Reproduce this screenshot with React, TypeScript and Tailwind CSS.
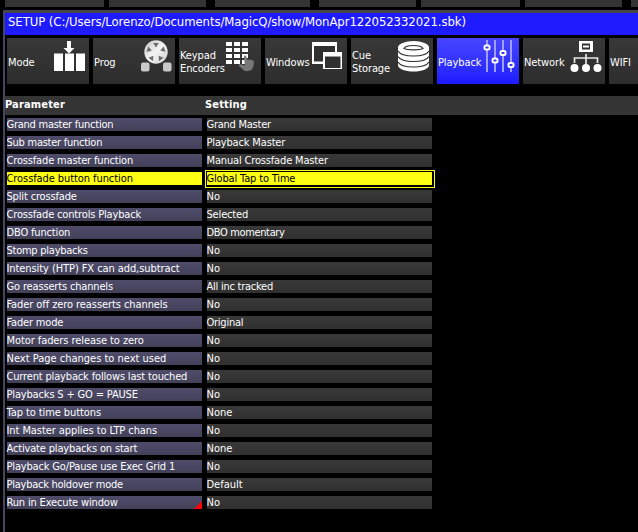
import type { ReactNode } from 'react';

const topBar = [
  'ml-[5px] w-[99px]',
  'ml-[5px] w-[97px]',
  'ml-[9px] w-[95px]',
  'ml-[9px] w-[97px]',
  'ml-[5px] w-[99px]',
  'ml-[5px] w-[97px]',
  'ml-[9px] w-[99px]',
];

function ModeIcon() {
  return (
    <svg width="34" height="34" viewBox="0 0 34 34">
      <path d="M14 1h4v7h3.500L16 13.500 10.500 8H14z" fill="#fff" />
      <path d="M1 13.500h9v17.500H1zM12 13.500h9v17.500h-9zM23 13.500h9v17.500h-9z" fill="#fff" />
    </svg>
  );
}

function ProgIcon() {
  return (
    <svg width="34" height="34" viewBox="0 0 34 34">
      <defs>
        <linearGradient id="wheel" x1="0" y1="0" x2="1" y2="1">
          <stop offset="0" stopColor="#c4c4c4" />
          <stop offset="0.5" stopColor="#f4f4f4" />
          <stop offset="1" stopColor="#cdcdcd" />
        </linearGradient>
      </defs>
      <circle cx="17" cy="12" r="11.700" fill="url(#wheel)" />
      <g fill="#6a6a6a">
        {[0, 72, 144, 216, 288].map((a) => (
          <path key={a} d="M14.200 3h5.600L17 7.500z" transform={`rotate(${a} 17 12)`} />
        ))}
      </g>
      <rect x="2" y="22.500" width="8.500" height="9" rx="2" fill="#c9c9c9" />
      <rect x="24" y="22.500" width="8.500" height="9" rx="2" fill="#c9c9c9" />
    </svg>
  );
}

function KeypadIcon() {
  return (
    <svg width="34" height="34" viewBox="0 0 34 34">
      <g fill="#fff">
        {[2, 8, 14, 20].map((y) =>
          [0, 8, 16].map((x) => <rect key={`${x}-${y}`} x={x + 1} y={y} width="6" height="4" />),
        )}
      </g>
      <path d="M19 16.500c0-1.300 1.800-1.300 2.200 0L22.500 20c.8-.8 1.800-.6 2.200 0 .8-.7 1.800-.4 2.100.3.900-.4 2 0 2 1.200.3 3-.3 6-2.300 8.500l-5 1.300-2-.6-5.500-4.600c-1-1.200.2-2.200 1.500-1.800l4.300 1.200z" fill="#777" />
    </svg>
  );
}

function WindowsIcon() {
  return (
    <svg width="34" height="34" viewBox="0 0 34 34">
      <path d="M1 2h25v22H1z" fill="#fff" />
      <path d="M3 6h21v15.500H3z" fill="#303030" />
      <path d="M12 12h19v17H12z" fill="#fff" />
      <path d="M14 16.500h15.500V28H14z" fill="#303030" />
    </svg>
  );
}

function StorageIcon() {
  return (
    <svg width="34" height="34" viewBox="0 0 34 34">
      <path d="M1 7v18c0 4 7 6.500 15.500 6.500S32 29 32 25V7z" fill="#fff" />
      <ellipse cx="16.500" cy="7.500" rx="15.500" ry="6.500" fill="#fff" />
      <path d="M7 8.500c1-2 5-3 9.500-3s8.500 1 9.500 3c-3 1.700-16 1.700-19 0z" fill="none" stroke="#303030" strokeWidth="1.200" />
      <g fill="none" stroke="#303030" strokeWidth="1.200">
        <path d="M1 11c2 3.500 8 5 15.500 5S30 14.500 32 11" />
        <path d="M1 16.500c2 3.500 8 5 15.500 5S30 20 32 16.500" />
        <path d="M1 22c2 3.500 8 5 15.500 5S30 25.500 32 22" />
      </g>
    </svg>
  );
}

function FadersIcon() {
  return (
    <svg width="34" height="34" viewBox="0 0 34 34">
      <path d="M4 0v32M12 0v32M20 0v32M28 0v32" stroke="#a09fff" strokeWidth="2" />
      <g fill="#3636ff" stroke="#fff" strokeWidth="2">
        <rect x="1.500" y="5.500" width="5" height="4" rx="1.500" />
        <rect x="9.500" y="18.500" width="5" height="4" rx="1.500" />
        <rect x="17.500" y="11" width="5" height="4" rx="1.500" />
        <rect x="25.500" y="23" width="5" height="4" rx="1.500" />
      </g>
    </svg>
  );
}

function NetworkIcon() {
  return (
    <svg width="34" height="34" viewBox="0 0 34 34">
      <path d="M10 1h14v11H10z" fill="#fff" />
      <path d="M13 3.500h8v6h-8z" fill="#303030" />
      <path d="M14 6.500h6" stroke="#fff" strokeWidth="2" />
      <path d="M17 14v10M5.500 23v-5h23v5" fill="none" stroke="#e6e6e6" strokeWidth="1.700" />
      <g fill="#fff">
        <circle cx="5.500" cy="28" r="4" />
        <circle cx="17" cy="28" r="4" />
        <circle cx="28.500" cy="28" r="4" />
      </g>
    </svg>
  );
}

const tabs: { lines: string[]; icon: ReactNode; active?: boolean }[] = [
  { lines: ['Mode'], icon: <ModeIcon /> },
  { lines: ['Prog'], icon: <ProgIcon /> },
  { lines: ['Keypad', 'Encoders'], icon: <KeypadIcon /> },
  { lines: ['Windows'], icon: <WindowsIcon /> },
  { lines: ['Cue', 'Storage'], icon: <StorageIcon /> },
  { lines: ['Playback'], icon: <FadersIcon />, active: true },
  { lines: ['Network'], icon: <NetworkIcon /> },
  { lines: ['WIFI'], icon: null },
];

const T = {
  a: 'tracking-normal',
  b: 'tracking-[-0.08px]',
  c: 'tracking-[-0.16px]',
  d: 'tracking-[-0.25px]',
  e: 'tracking-[-0.36px]',
};

const rows: [string, string, string, string][] = [
  ['Grand master function', T.d, 'Grand Master', T.d],
  ['Sub master function', T.d, 'Playback Master', T.c],
  ['Crossfade master function', T.c, 'Manual Crossfade Master', T.c],
  ['Crossfade button function', T.b, 'Global Tap to Time', T.c],
  ['Split crossfade', T.c, 'No', T.a],
  ['Crossfade controls Playback', T.c, 'Selected', T.c],
  ['DBO function', T.c, 'DBO momentary', T.e],
  ['Stomp playbacks', T.d, 'No', T.a],
  ['Intensity (HTP) FX can add,subtract', T.b, 'No', T.a],
  ['Go reasserts channels', T.c, 'All inc tracked', T.d],
  ['Fader off zero reasserts channels', T.b, 'No', T.a],
  ['Fader mode', T.c, 'Original', T.d],
  ['Motor faders release to zero', T.b, 'No', T.a],
  ['Next Page changes to next used', T.a, 'No', T.a],
  ['Current playback follows last touched', T.c, 'No', T.a],
  ['Playbacks S + GO = PAUSE', T.c, 'No', T.a],
  ['Tap to time buttons', T.b, 'None', T.a],
  ['Int Master applies to LTP chans', T.b, 'No', T.a],
  ['Activate playbacks on start', T.c, 'None', T.a],
  ['Playback Go/Pause use Exec Grid 1', T.c, 'No', T.a],
  ['Playback holdover mode', T.d, 'Default', T.a],
  ['Run in Execute window', T.c, 'No', T.a],
];

const selectedRow = 3;

export default function App() {
  return (
    <div className="flex h-[532px] w-[638px] flex-col overflow-hidden bg-black font-['DejaVu_Sans_Condensed','DejaVu_Sans',sans-serif] text-[11px] whitespace-pre text-white">
      <div className="flex h-[7px] shrink-0">
        {topBar.map((c, i) => (
          <div key={i} className={`shrink-0 bg-[#333] ${c}`} />
        ))}
      </div>
      <div className="mt-[3px] ml-[3px] flex grow flex-col border-t-[3px] border-l-2 border-t-[#45454b] border-l-[#454560]">
        <div className="flex h-[22px] shrink-0 items-start bg-[#1f1bff] pl-[3px] text-[13px] leading-[18px] tracking-[-0.08px]">
          SETUP (C:/Users/Lorenzo/Documents/MagicQ/show/MonApr122052332021.sbk)
        </div>
        <div className="mt-[3px] flex h-[46px] shrink-0 gap-1 overflow-hidden pl-[2px]">
          {tabs.map((t) => (
            <div
              key={t.lines[0]}
              className={`flex w-[82px] shrink-0 items-start justify-between pl-px ${t.active ? 'bg-linear-to-b from-[#4844ff] to-[#1d19ff]' : 'bg-linear-to-b from-[#383838] to-[#2d2d2d]'}`}
            >
              <div className="flex h-[48px] w-[45px] flex-col justify-center leading-[13px] tracking-[-0.1px]">
                {t.lines.map((l) => (
                  <span key={l}>{l}</span>
                ))}
              </div>
              <div className="mt-[2px] w-[36px] shrink-0">{t.icon}</div>
            </div>
          ))}
        </div>
        <div className="mt-3 mb-[3px] flex h-[19px] shrink-0 bg-[#353535] leading-[18px] font-bold tracking-[0.16px]">
          <span className="w-[200px]">Parameter</span>
          <span>Setting</span>
        </div>
        <div className="flex flex-col gap-[5px] pl-[2px]">
          {rows.map(([name, nameTracking, value, valueTracking], i) => {
            const on = i === selectedRow;
            return (
              <div key={name} className="flex h-[13px] gap-[5px] leading-[13px]">
                <div
                  className={`flex w-[195px] items-end justify-between ${on ? 'bg-[#ffff14] text-black' : 'bg-linear-to-b from-[#4e4c6a] to-[#434159]'}`}
                >
                  <span className={`-ml-[0.5px] ${nameTracking}`}>{name}</span>
                  {i === rows.length - 1 && (
                    <svg width="8" height="8" viewBox="0 0 8 8">
                      <path d="M8 0v8H0z" fill="#f00" />
                    </svg>
                  )}
                </div>
                <div
                  className={`relative w-[225px] ${on ? 'bg-[#ffff14] text-black' : 'bg-linear-to-b from-[#393939] to-[#303030]'}`}
                >
                  <span className={`-ml-[0.5px] ${valueTracking}`}>{value}</span>
                  {on && (
                    <div className="absolute -top-[2px] -right-[3px] -bottom-[3px] -left-[2px] border border-[#ffff14]" />
                  )}
                </div>
              </div>
            );
          })}
        </div>
      </div>
    </div>
  );
}
